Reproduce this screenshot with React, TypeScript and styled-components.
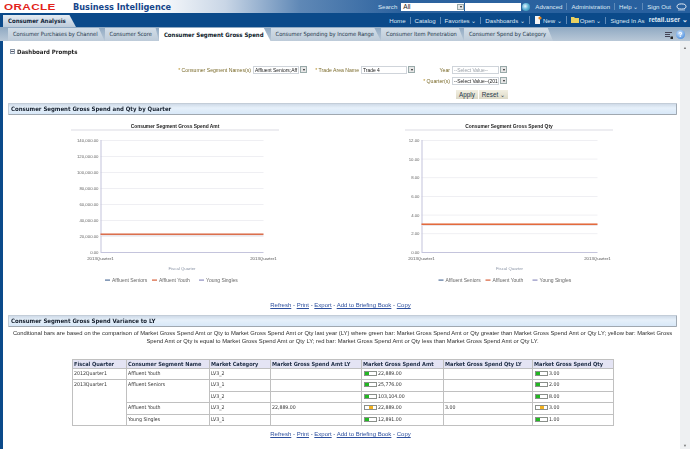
import React from "react";
import styled, { createGlobalStyle } from "styled-components";

const Global = createGlobalStyle`
  html, body { margin: 0; padding: 0; background: #fff; overflow: hidden; }
  body { font-family: "Liberation Sans", Arial, sans-serif; font-size: 6.5px; color: #333; }
`;

const TAHOMA = `"DejaVu Sans Condensed", "DejaVu Sans", sans-serif`;

const Page = styled.div`
  width: 690px; height: 449px; display: flex; flex-direction: column; overflow: hidden;
  filter: blur(0.3px);
`;
const Brand = styled.div`
  height: 13px; flex: none; display: flex; align-items: center; padding-right: 3px;
  background: linear-gradient(90deg, #fff 0, #fff 150px, #c9d6e6 225px, #5f88b6 300px, #2d639f 400px, #27609f 100%);
`;
const OracleLogo = styled.span`
  width: 56px; margin-left: 4px; font: bold 9px "Liberation Sans", sans-serif; letter-spacing: .3px; color: #e2231a;
  transform: scaleX(1.3); transform-origin: left center; white-space: nowrap; flex: none;
`;
const BI = styled.span`
  margin-left: 13px; color: #17468a; font: bold 8.2px "DejaVu Sans", sans-serif; margin-right: auto; white-space: nowrap;
`;
const NavLink = styled.span<{ $bold?: boolean; $sep?: boolean }>`
  color: #dfe9f4; white-space: nowrap; font-size: ${p => (p.$bold ? 6.6 : 6.1)}px; font-weight: ${p => (p.$bold ? 700 : 400)};
  ${p => p.$sep ? "border-left: 1px solid #5f8ab8; padding-left: 4px; margin-left: 4px;" : ""}
  ${p => p.$bold ? "margin-left: 4px;" : ""}
`;
const SearchSelect = styled.div`
  width: 63px; height: 8px; background: #fff; color: #222; margin-left: 4px; padding-left: 2px; display: flex; justify-content: space-between;
  align-items: center; box-sizing: border-box; line-height: 8px;
`;
const SearchInput = styled.div`
  width: 56px; height: 8px; background: #fff; margin-left: 1px;
`;
const Arrow = styled.span`
  width: 7px; height: 6px; flex: none; background: #e6e6e6; border: 1px solid #9aa; box-sizing: border-box; display: inline-flex;
  align-items: center; justify-content: center;
  &::after { content: ""; border: 1.5px solid transparent; border-top: 2px solid #222; border-bottom: 0; }
`;
const PromptArrow = styled(Arrow)`
  margin-left: 1px; height: 7px;
`;
const GoDot = styled.span`
  width: 8px; height: 8px; border-radius: 50%; margin: 0 5px 0 1px; flex: none;
  background: radial-gradient(circle at 40% 40%, #eaf6ff 0, #62b6d8 45%, #1d7a9c 100%);
`;
const NavBar = styled.div`
  height: 14px; flex: none; background: #0b4a8a; display: flex; align-items: flex-end; padding-left: 3px;
`;
const RootTab = styled.div`
  width: 68px; height: 12px; padding-left: 5px; background: linear-gradient(#e4ebf2, #bccbda);
  clip-path: polygon(0 0, 91% 0, 100% 100%, 0 100%); white-space: nowrap;
  font: condensed bold 6px/12px ${TAHOMA}; color: #12263a;
`;
const NavItems = styled.div`
  margin-left: auto; height: 14px; display: flex; align-items: center; padding-right: 2px;
`;
const NavIcon = styled.svg`
  width: 8px; height: 8px; margin-right: 1px; vertical-align: -1px;
`;
const TabStrip = styled.div`
  height: 14px; flex: none; display: flex; align-items: flex-end; padding-left: 8px;
  background: linear-gradient(#8fa9c2, #b9c8d7);
`;
const SubTab = styled.div<{ $active?: boolean }>`
  height: 13px; padding: 0 7px 0 5px; white-space: nowrap; color: ${p => (p.$active ? "#0e1c2c" : "#25384c")};
  font: ${p => (p.$active ? `condensed bold 6px/13px ${TAHOMA}` : `condensed 5.72px/13px ${TAHOMA}`)};
  background: ${p => (p.$active ? "#fff" : "linear-gradient(#d2dde7, #bdcbd9)")};
  clip-path: polygon(0 0, 94% 0, 100% 100%, 0 100%);
  flex: none;
`;
const StripIcons = styled.div`
  margin-left: auto; display: flex; align-items: center; gap: 3px; height: 13px; padding-right: 5px;
`;
const HelpDot = styled.span`
  width: 9px; height: 9px; border-radius: 50%; background: radial-gradient(circle at 40% 35%, #cfe6ff, #2c78d4); color: #fff;
  font: bold 7px/9px "Liberation Sans", sans-serif; text-align: center;
`;
const Body = styled.div`
  flex: 1; min-height: 0; display: flex; border-left: 3px solid #0b4a8a;
`;
const Main = styled.div`
  flex: 1; min-width: 0; padding: 0 3px 0 5px; display: flex; flex-direction: column;
`;
const Scrollbar = styled.div`
  width: 10px; flex: none; background: #eef0f2; display: flex; flex-direction: column; justify-content: space-between; align-items: center;
  padding: 5px 0 1px; box-sizing: border-box; color: #777; font-size: 4px; line-height: 4px;
`;
const PromptTitle = styled.div`
  margin: 6px 0 0 2px; height: 8px; display: flex; align-items: center; gap: 1px; font: condensed bold 6px ${TAHOMA}; color: #1c1c1c;
`;
const Plus = styled.span`
  width: 5px; height: 5px; border: 1px solid #8a98a8; box-sizing: border-box; position: relative; margin-right: 1px;
  background: #f4f6f8;
  &::after { content: ""; position: absolute; left: 0; right: 0; top: 1px; height: 1px; background: #556; }
`;
const Prompts = styled.div`
  display: grid; height: 39px; margin-top: 9px; margin-left: 172px; flex: none;
  grid-template-columns: 73px 46px 11px 51px 46px 29px 16px 47px 9px;
  grid-template-rows: 11px 11px 14px; align-items: center;
`;
const Label = styled.div<{ $col?: number }>`
  color: #7a6a2a; white-space: nowrap; justify-self: end; padding-right: 2px; font-size: 5.15px;
  ${p => (p.$col ? `grid-column: ${p.$col};` : "")}
`;
const Star = styled.span` color: #b58a1e; `;
const Field = styled.div<{ $muted?: boolean; $col?: number }>`
  height: 8px; line-height: 7px; background: #fff; border: 1px solid #cfd4da; box-sizing: border-box; padding-left: 1px;
  font-size: 4.95px; color: ${p => (p.$muted ? "#9aa0a8" : "#222")}; overflow: hidden; white-space: nowrap;
  ${p => (p.$col ? `grid-column: ${p.$col};` : "")}
`;
const Buttons = styled.div`
  grid-column: 7 / 10; justify-self: end; display: flex; gap: 1px; margin-top: 3px;
`;
const Btn = styled.div`
  height: 9px; line-height: 9px; padding: 0 3px; background: linear-gradient(#f2efe2, #dcd9c6);
  color: #25384c; font-size: 6.3px; white-space: nowrap;
`;
const SectionBar = styled.div<{ $top?: number }>`
  height: 10px; padding-left: 2px; flex: none; margin-top: ${p => p.$top ?? 0}px;
  border: 1px solid #c3cdd8; border-bottom-color: #a0a8b0; border-right-color: #a0aab4; border-radius: 1px;
  background: linear-gradient(#cfdae8, #e6f0fa 40%, #d8e8f8);
  font: condensed bold 6px/10px ${TAHOMA}; color: #141e2c; overflow: hidden;
`;
const Charts = styled.div`
  display: grid; grid-template-columns: 1fr 1fr; height: 172px; margin-top: 4px; flex: none;
`;
const ChartSvg = styled.svg`
  display: block; width: 334px; height: 172px;
`;
const LinksRow = styled.div<{ $top: number }>`
  text-align: center; margin-top: ${p => p.$top}px; height: 9px; line-height: 9px; font-size: 6px; color: #33508c; flex: none;
  padding-right: 4px;
  a { color: #2c4f9e; text-decoration: underline; }
`;
const Note = styled.div`
  margin-top: 3px; text-align: center; font-size: 5.83px; line-height: 7.5px; color: #2e2e2e; height: 29px; flex: none;
`;
const Table = styled.table`
  border-collapse: collapse; margin-left: 64px; flex: none; table-layout: fixed; width: 541px; font: condensed 5.2px ${TAHOMA}; color: #333;
  border: 1px solid #a8a8a8;
  th { background: #e4e4f4; font-weight: 700; font-size: 5.6px; color: #1d2c44; text-align: left; height: 9px; padding: 0 1px; white-space: nowrap; overflow: hidden; }
  td { height: 11.4px; padding: 0 1px; vertical-align: top; line-height: 8px; white-space: nowrap; }
  th, td { border: 1px solid #c0c0c0; box-sizing: border-box; }
`;
const BarCell = styled.span`
  display: flex; align-items: flex-start; padding-left: 1px;
`;
const Meter = styled.span`
  width: 13px; height: 5px; margin: 2px 1px 0 0; border: 1px solid #8a8f8a; box-sizing: border-box; background: #fff; flex: none; display: flex;
`;
const MeterFill = styled.span<{ $color: string; $left: number }>`
  width: 3.5px; margin-left: ${p => p.$left}px; background: ${p => p.$color};
`;

type ChartProps = { title: string; labels: string[]; x0: number; width: number; lineY: number; lineC: string; cx: number; legendX: number };
const Chart = ({ title, labels, x0, width, lineY, lineC, cx, legendX }: ChartProps) => {
  const left = x0, right = x0 + width, top = 21, bottom = 133;
  const step = (bottom - top) / (labels.length - 1);
  return (
    <ChartSvg viewBox="0 0 334 172" fontFamily="'Liberation Sans', sans-serif">
      <text x={cx} y="8.7" fontSize="4.9" fontWeight="700" fill="#222" textAnchor="middle">{title}</text>
      <rect x={cx - 104} y="10.5" width="208" height="1" fill="#dcdce4" />
      {labels.map((l, i) => {
        const y = top + step * i;
        return (
          <g key={l}>
            {i < labels.length - 1 && <rect x={left} y={y} width={width} height="0.8" fill="#ececf0" />}
            <text x={left - 2} y={y + 2} fontSize="4.3" fill="#666" textAnchor="end">{l}</text>
          </g>
        );
      })}
      <rect x={left} y={top} width="1" height={bottom - top} fill="#c4c4dc" />
      <rect x={left} y={bottom} width={width} height="1" fill="#c4c4dc" />
      <rect x={left} y={lineY + 1.2} width={width} height="1.2" fill="#e8e4e8" />
      <rect x={left} y={lineY} width={width} height="1.4" fill={lineC} />
      <text x={left} y="140.5" fontSize="4.3" fill="#555" textAnchor="middle">2013Quarter1</text>
      <text x={right} y="140.5" fontSize="4.3" fill="#555" textAnchor="middle">2013Quarter1</text>
      <text x={left + width / 2} y="150.5" fontSize="4.3" fill="#8892a4" textAnchor="middle">Fiscal Quarter</text>
      <g fontSize="5" fill="#666">
        <rect x={legendX} y="160.5" width="5" height="1.2" fill="#54729c" />
        <text x={legendX + 7} y="163">Affluent Seniors</text>
        <rect x={legendX + 47} y="160.5" width="5" height="1.2" fill="#d8603a" />
        <text x={legendX + 54} y="163">Affluent Youth</text>
        <rect x={legendX + 94} y="160.5" width="5" height="1.2" fill="#8f8fc0" />
        <text x={legendX + 101} y="163">Young Singles</text>
      </g>
    </ChartSvg>
  );
};

const Bar = ({ v, color = "#22b822", left = 0 }: { v: string; color?: string; left?: number }) => (
  <BarCell>
    <Meter><MeterFill $color={color} $left={left} /></Meter>{v}
  </BarCell>
);

const Links = ({ top }: { top: number }) => (
  <LinksRow $top={top}>
    <a>Refresh</a> - <a>Print</a> - <a>Export</a> - <a>Add to Briefing Book</a> - <a>Copy</a>
  </LinksRow>
);

export default function App() {
  return (
    <Page>
      <Global />
      <Brand>
        <OracleLogo>ORACLE</OracleLogo>
        <BI>Business Intelligence</BI>
        <NavLink>Search</NavLink>
        <SearchSelect>All<Arrow /></SearchSelect>
        <SearchInput />
        <GoDot />
        <NavLink>Advanced</NavLink>
        <NavLink $sep>Administration</NavLink>
        <NavLink $sep>Help ⌄</NavLink>
        <NavLink $sep>Sign Out</NavLink>
        <svg width="11" height="8" viewBox="0 0 11 8" style={{ marginLeft: 5 }}>
          <ellipse cx="5.5" cy="3.5" rx="4.5" ry="2.6" fill="none" stroke="#e8eef6" strokeWidth="1" />
          <path d="M2 7h7" stroke="#9db8d6" strokeWidth="1" />
        </svg>
      </Brand>
      <NavBar>
        <RootTab>Consumer Analysis</RootTab>
        <NavItems>
          <NavLink>Home</NavLink>
          <NavLink $sep>Catalog</NavLink>
          <NavLink $sep>Favorites ⌄</NavLink>
          <NavLink $sep>Dashboards ⌄</NavLink>
          <NavLink $sep>
            <NavIcon viewBox="0 0 8 8"><path d="M1 0h5v8H1z" fill="#f4f4f4" /><circle cx="6" cy="2" r="1.6" fill="#e8861c" /></NavIcon>
            New ⌄
          </NavLink>
          <NavLink $sep>
            <NavIcon viewBox="0 0 8 8"><path d="M0 1h3l1 1h4v5H0z" fill="#e8d060" /></NavIcon>
            Open ⌄
          </NavLink>
          <NavLink $sep>Signed In As</NavLink>
          <NavLink $bold>retail.user ⌄</NavLink>
        </NavItems>
      </NavBar>
      <TabStrip>
        <SubTab>Consumer Purchases by Channel</SubTab>
        <SubTab>Consumer Score</SubTab>
        <SubTab $active>Consumer Segment Gross Spend</SubTab>
        <SubTab>Consumer Spending by Income Range</SubTab>
        <SubTab>Consumer Item Penetration</SubTab>
        <SubTab>Consumer Spend by Category</SubTab>
        <StripIcons>
          <svg width="8" height="8" viewBox="0 0 8 8"><path d="M0 1.5h7M0 3.5h5M0 5.5h5" stroke="#445" strokeWidth="1" /><path d="M5.5 5.5h2.5v2.5h-2.5z" fill="#222" /></svg>
          <HelpDot>?</HelpDot>
        </StripIcons>
      </TabStrip>
      <Body>
        <Main>
          <PromptTitle><Plus />Dashboard Prompts</PromptTitle>
          <Prompts>
            <Label><Star>* </Star>Consumer Segment Names(s)</Label>
            <Field>Affluent Seniors;Aff</Field>
            <PromptArrow />
            <Label><Star>* </Star>Trade Area Name</Label>
            <Field>Trade 4</Field>
            <PromptArrow />
            <Label>Year</Label>
            <Field $muted>--Select Value--</Field>
            <PromptArrow />
            <Label $col={7}><Star>* </Star>Quarter(s)</Label>
            <Field $col={8}>--Select Value--(201</Field>
            <PromptArrow />
            <Buttons>
              <Btn>Apply</Btn>
              <Btn>Reset ⌄</Btn>
            </Buttons>
          </Prompts>
          <SectionBar>Consumer Segment Gross Spend and Qty by Quarter</SectionBar>
          <Charts>
            <Chart title="Consumer Segment Gross Spend Amt" x0={92.5} width={163} cx={167} legendX={97}
              labels={["140,000.00","120,000.00","100,000.00","80,000.00","60,000.00","40,000.00","20,000.00","0.00"]} lineY={114.5} lineC="#d8603a" />
            <Chart title="Consumer Segment Gross Spend Qty" x0={78.5} width={176} cx={166} legendX={95.5}
              labels={["12.00","10.00","8.00","6.00","4.00","2.00","0.00"]} lineY={104.5} lineC="#e05a28" />
          </Charts>
          <Links top={10} />
          <SectionBar $top={5}>Consumer Segment Gross Spend Variance to LY</SectionBar>
          <Note>
            Conditional bars are based on the comparison of Market Gross Spend Amt or Qty to Market Gross Spend Amt or Qty last year (LY) where green bar: Market Gross Spend Amt or Qty greater than Market Gross Spend Amt or Qty LY; yellow bar: Market Gross Spend Amt or Qty is equal to Market Gross Spend Amt or Qty LY; red bar: Market Gross Spend Amt or Qty less than Market Gross Spend Amt or Qty LY.
          </Note>
          <Table>
            <colgroup>
              <col style={{ width: 54 }} /><col style={{ width: 83 }} /><col style={{ width: 61 }} /><col style={{ width: 91 }} />
              <col style={{ width: 82 }} /><col style={{ width: 89 }} /><col style={{ width: 81 }} />
            </colgroup>
            <thead>
              <tr><th>Fiscal Quarter</th><th>Consumer Segment Name</th><th>Market Category</th><th>Market Gross Spend Amt LY</th><th>Market Gross Spend Amt</th><th>Market Gross Spend Qty LY</th><th>Market Gross Spend Qty</th></tr>
            </thead>
            <tbody>
              <tr><td>2012Quarter1</td><td>Affluent Youth</td><td>LV3_2</td><td /><td><Bar v="22,889.00" /></td><td /><td><Bar v="3.00" /></td></tr>
              <tr><td rowSpan={4}>2013Quarter1</td><td rowSpan={2}>Affluent Seniors</td><td>LV3_1</td><td /><td><Bar v="25,776.00" /></td><td /><td><Bar v="2.00" /></td></tr>
              <tr><td>LV3_2</td><td /><td><Bar v="103,104.00" /></td><td /><td><Bar v="8.00" /></td></tr>
              <tr><td>Affluent Youth</td><td>LV3_2</td><td>22,889.00</td><td><Bar v="22,889.00" color="#f0b020" left={4} /></td><td>3.00</td><td><Bar v="3.00" color="#f0b020" left={4} /></td></tr>
              <tr><td>Young Singles</td><td>LV3_1</td><td /><td><Bar v="12,891.00" /></td><td /><td><Bar v="1.00" /></td></tr>
            </tbody>
          </Table>
          <Links top={4} />
        </Main>
        <Scrollbar><span>▲</span><span>▼</span></Scrollbar>
      </Body>
    </Page>
  );
}
